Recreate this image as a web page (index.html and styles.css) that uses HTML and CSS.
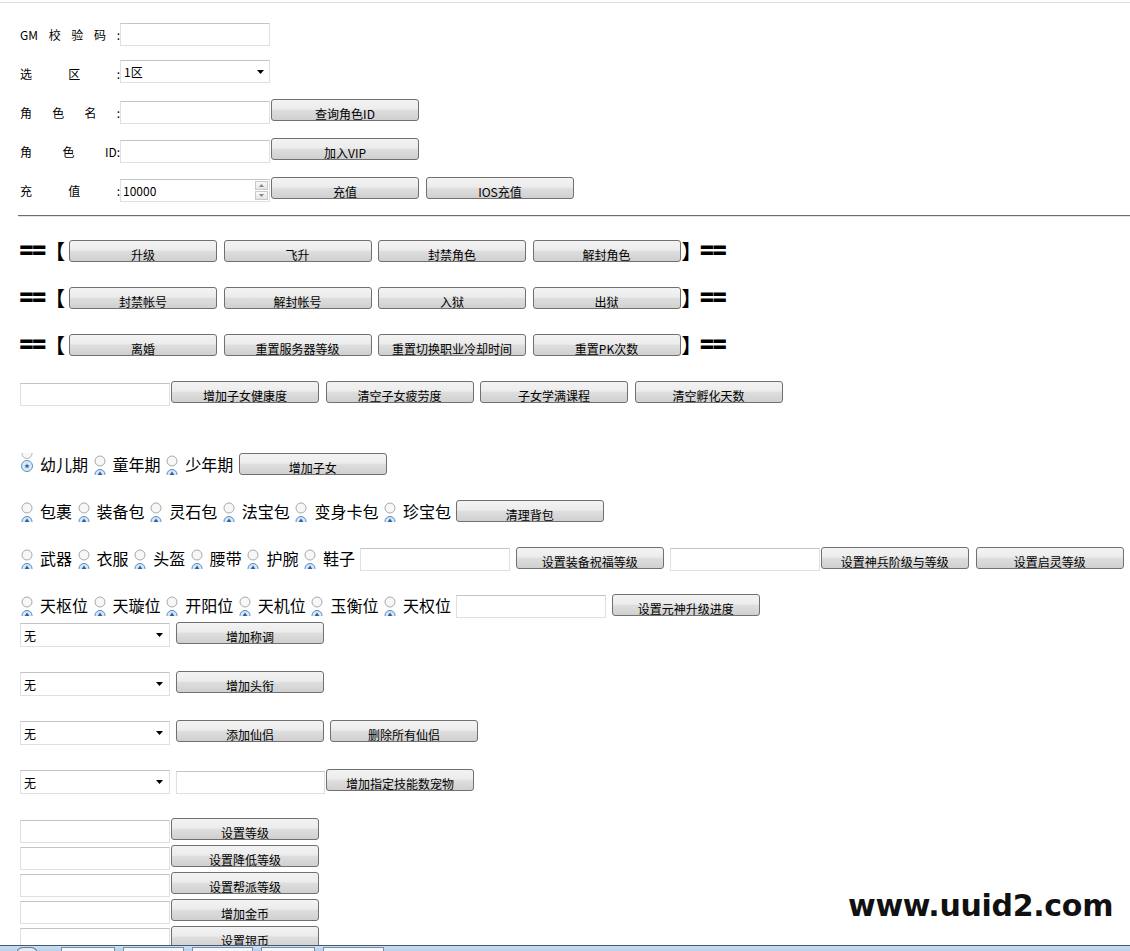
FILE: index.html
```html
<!DOCTYPE html>
<html lang="zh-CN">
<head>
<meta charset="utf-8">
<title>GM</title>
<link rel="stylesheet" href="styles.css">
</head>
<body>
<div class="topline"></div>
<div class="page">

  <section class="form">
    <div class="row frow">
      <div class="lbl"><span>GM</span><span>校</span><span>验</span><span>码</span><span>:</span></div>
      <input class="inp" type="text">
    </div>
    <div class="row frow">
      <div class="lbl"><span>选</span><span>区</span><span>:</span></div>
      <div class="sel"><span>1区</span><svg width="7" height="4" viewBox="0 0 7 4"><path d="M0 0H7L3.5 4Z" fill="#000"/></svg></div>
    </div>
    <div class="row frow">
      <div class="lbl"><span>角</span><span>色</span><span>名</span><span>:</span></div>
      <input class="inp" type="text">
      <button class="btn ml1">查询角色ID</button>
    </div>
    <div class="row frow">
      <div class="lbl"><span>角</span><span>色</span><span>ID:</span></div>
      <input class="inp" type="text">
      <button class="btn ml1">加入VIP</button>
    </div>
    <div class="row frow">
      <div class="lbl"><span>充</span><span>值</span><span>:</span></div>
      <div class="inp spin"><span>10000</span>
        <div class="spinbtns">
          <div class="sb"><svg width="5" height="3" viewBox="0 0 5 3"><path d="M0 3H5L2.5 0Z" fill="#7a8a9a"/></svg></div>
          <div class="sb"><svg width="5" height="3" viewBox="0 0 5 3"><path d="M0 0H5L2.5 3Z" fill="#7a8a9a"/></svg></div>
        </div>
      </div>
      <button class="btn ml1">充值</button>
      <button class="btn ml7">IOS充值</button>
    </div>
  </section>

  <hr class="sep">

  <section class="ops">
    <div class="row brow">
      <span class="eq">==</span><span class="lb">【</span>
      <div class="bgroup"><button class="btn">升级</button><button class="btn">飞升</button><button class="btn">封禁角色</button><button class="btn">解封角色</button></div>
      <span class="rb">】</span><span class="eq">==</span>
    </div>
    <div class="row brow">
      <span class="eq">==</span><span class="lb">【</span>
      <div class="bgroup"><button class="btn">封禁帐号</button><button class="btn">解封帐号</button><button class="btn">入狱</button><button class="btn">出狱</button></div>
      <span class="rb">】</span><span class="eq">==</span>
    </div>
    <div class="row brow">
      <span class="eq">==</span><span class="lb">【</span>
      <div class="bgroup"><button class="btn">离婚</button><button class="btn">重置服务器等级</button><button class="btn">重置切换职业冷却时间</button><button class="btn">重置PK次数</button></div>
      <span class="rb">】</span><span class="eq">==</span>
    </div>
    <div class="row crow">
      <input class="inp" type="text">
      <div class="bgroup ml1"><button class="btn">增加子女健康度</button><button class="btn">清空子女疲劳度</button><button class="btn">子女学满课程</button><button class="btn">清空孵化天数</button></div>
    </div>
  </section>

  <section class="radios">
    <div class="row rrow first">
      <label class="opt"><svg class="rd" width="14" height="22" viewBox="0 0 14 22"><circle cx="7" cy="0.5" r="5" fill="#f7f7f7" stroke="#b4b4b4"/><circle cx="7" cy="13" r="5.5" fill="#dce9f6" stroke="#5c90c6"/><path d="M7 10.4L7.8 12.2H9.7L8.2 13.4L8.8 15.3L7 14.2L5.2 15.3L5.8 13.4L4.3 12.2H6.2Z" fill="#2d63a8"/></svg>幼儿期</label>
      <label class="opt"><svg class="rd" width="14" height="22" viewBox="0 0 14 22"><circle cx="7" cy="8" r="5" fill="#f7f7f7" stroke="#a9a9a9"/><circle cx="7" cy="21.5" r="5" fill="#d5e6f6" stroke="#4f8bc6"/><path d="M4.6 22L7 18.6L9.4 22Z" fill="#2a5f9e"/></svg>童年期</label>
      <label class="opt"><svg class="rd" width="14" height="22" viewBox="0 0 14 22"><circle cx="7" cy="8" r="5" fill="#f7f7f7" stroke="#a9a9a9"/><circle cx="7" cy="21.5" r="5" fill="#d5e6f6" stroke="#4f8bc6"/><path d="M4.6 22L7 18.6L9.4 22Z" fill="#2a5f9e"/></svg>少年期</label>
      <button class="btn ml1">增加子女</button>
    </div>
    <div class="row rrow">
      <label class="opt"><svg class="rd" width="14" height="22" viewBox="0 0 14 22"><circle cx="7" cy="8" r="5" fill="#f7f7f7" stroke="#a9a9a9"/><circle cx="7" cy="21.5" r="5" fill="#d5e6f6" stroke="#4f8bc6"/><path d="M4.6 22L7 18.6L9.4 22Z" fill="#2a5f9e"/></svg>包裹</label>
      <label class="opt"><svg class="rd" width="14" height="22" viewBox="0 0 14 22"><circle cx="7" cy="8" r="5" fill="#f7f7f7" stroke="#a9a9a9"/><circle cx="7" cy="21.5" r="5" fill="#d5e6f6" stroke="#4f8bc6"/><path d="M4.6 22L7 18.6L9.4 22Z" fill="#2a5f9e"/></svg>装备包</label>
      <label class="opt"><svg class="rd" width="14" height="22" viewBox="0 0 14 22"><circle cx="7" cy="8" r="5" fill="#f7f7f7" stroke="#a9a9a9"/><circle cx="7" cy="21.5" r="5" fill="#d5e6f6" stroke="#4f8bc6"/><path d="M4.6 22L7 18.6L9.4 22Z" fill="#2a5f9e"/></svg>灵石包</label>
      <label class="opt"><svg class="rd" width="14" height="22" viewBox="0 0 14 22"><circle cx="7" cy="8" r="5" fill="#f7f7f7" stroke="#a9a9a9"/><circle cx="7" cy="21.5" r="5" fill="#d5e6f6" stroke="#4f8bc6"/><path d="M4.6 22L7 18.6L9.4 22Z" fill="#2a5f9e"/></svg>法宝包</label>
      <label class="opt"><svg class="rd" width="14" height="22" viewBox="0 0 14 22"><circle cx="7" cy="8" r="5" fill="#f7f7f7" stroke="#a9a9a9"/><circle cx="7" cy="21.5" r="5" fill="#d5e6f6" stroke="#4f8bc6"/><path d="M4.6 22L7 18.6L9.4 22Z" fill="#2a5f9e"/></svg>变身卡包</label>
      <label class="opt"><svg class="rd" width="14" height="22" viewBox="0 0 14 22"><circle cx="7" cy="8" r="5" fill="#f7f7f7" stroke="#a9a9a9"/><circle cx="7" cy="21.5" r="5" fill="#d5e6f6" stroke="#4f8bc6"/><path d="M4.6 22L7 18.6L9.4 22Z" fill="#2a5f9e"/></svg>珍宝包</label>
      <button class="btn">清理背包</button>
    </div>
    <div class="row rrow">
      <label class="opt"><svg class="rd" width="14" height="22" viewBox="0 0 14 22"><circle cx="7" cy="8" r="5" fill="#f7f7f7" stroke="#a9a9a9"/><circle cx="7" cy="21.5" r="5" fill="#d5e6f6" stroke="#4f8bc6"/><path d="M4.6 22L7 18.6L9.4 22Z" fill="#2a5f9e"/></svg>武器</label>
      <label class="opt"><svg class="rd" width="14" height="22" viewBox="0 0 14 22"><circle cx="7" cy="8" r="5" fill="#f7f7f7" stroke="#a9a9a9"/><circle cx="7" cy="21.5" r="5" fill="#d5e6f6" stroke="#4f8bc6"/><path d="M4.6 22L7 18.6L9.4 22Z" fill="#2a5f9e"/></svg>衣服</label>
      <label class="opt"><svg class="rd" width="14" height="22" viewBox="0 0 14 22"><circle cx="7" cy="8" r="5" fill="#f7f7f7" stroke="#a9a9a9"/><circle cx="7" cy="21.5" r="5" fill="#d5e6f6" stroke="#4f8bc6"/><path d="M4.6 22L7 18.6L9.4 22Z" fill="#2a5f9e"/></svg>头盔</label>
      <label class="opt"><svg class="rd" width="14" height="22" viewBox="0 0 14 22"><circle cx="7" cy="8" r="5" fill="#f7f7f7" stroke="#a9a9a9"/><circle cx="7" cy="21.5" r="5" fill="#d5e6f6" stroke="#4f8bc6"/><path d="M4.6 22L7 18.6L9.4 22Z" fill="#2a5f9e"/></svg>腰带</label>
      <label class="opt"><svg class="rd" width="14" height="22" viewBox="0 0 14 22"><circle cx="7" cy="8" r="5" fill="#f7f7f7" stroke="#a9a9a9"/><circle cx="7" cy="21.5" r="5" fill="#d5e6f6" stroke="#4f8bc6"/><path d="M4.6 22L7 18.6L9.4 22Z" fill="#2a5f9e"/></svg>护腕</label>
      <label class="opt"><svg class="rd" width="14" height="22" viewBox="0 0 14 22"><circle cx="7" cy="8" r="5" fill="#f7f7f7" stroke="#a9a9a9"/><circle cx="7" cy="21.5" r="5" fill="#d5e6f6" stroke="#4f8bc6"/><path d="M4.6 22L7 18.6L9.4 22Z" fill="#2a5f9e"/></svg>鞋子</label>
      <input class="inp mt1" type="text">
      <button class="btn ml6">设置装备祝福等级</button>
      <input class="inp mt1 ml6" type="text">
      <button class="btn ml1">设置神兵阶级与等级</button>
      <button class="btn ml7">设置启灵等级</button>
    </div>
    <div class="row rrow">
      <label class="opt"><svg class="rd" width="14" height="22" viewBox="0 0 14 22"><circle cx="7" cy="8" r="5" fill="#f7f7f7" stroke="#a9a9a9"/><circle cx="7" cy="21.5" r="5" fill="#d5e6f6" stroke="#4f8bc6"/><path d="M4.6 22L7 18.6L9.4 22Z" fill="#2a5f9e"/></svg>天枢位</label>
      <label class="opt"><svg class="rd" width="14" height="22" viewBox="0 0 14 22"><circle cx="7" cy="8" r="5" fill="#f7f7f7" stroke="#a9a9a9"/><circle cx="7" cy="21.5" r="5" fill="#d5e6f6" stroke="#4f8bc6"/><path d="M4.6 22L7 18.6L9.4 22Z" fill="#2a5f9e"/></svg>天璇位</label>
      <label class="opt"><svg class="rd" width="14" height="22" viewBox="0 0 14 22"><circle cx="7" cy="8" r="5" fill="#f7f7f7" stroke="#a9a9a9"/><circle cx="7" cy="21.5" r="5" fill="#d5e6f6" stroke="#4f8bc6"/><path d="M4.6 22L7 18.6L9.4 22Z" fill="#2a5f9e"/></svg>开阳位</label>
      <label class="opt"><svg class="rd" width="14" height="22" viewBox="0 0 14 22"><circle cx="7" cy="8" r="5" fill="#f7f7f7" stroke="#a9a9a9"/><circle cx="7" cy="21.5" r="5" fill="#d5e6f6" stroke="#4f8bc6"/><path d="M4.6 22L7 18.6L9.4 22Z" fill="#2a5f9e"/></svg>天机位</label>
      <label class="opt"><svg class="rd" width="14" height="22" viewBox="0 0 14 22"><circle cx="7" cy="8" r="5" fill="#f7f7f7" stroke="#a9a9a9"/><circle cx="7" cy="21.5" r="5" fill="#d5e6f6" stroke="#4f8bc6"/><path d="M4.6 22L7 18.6L9.4 22Z" fill="#2a5f9e"/></svg>玉衡位</label>
      <label class="opt"><svg class="rd" width="14" height="22" viewBox="0 0 14 22"><circle cx="7" cy="8" r="5" fill="#f7f7f7" stroke="#a9a9a9"/><circle cx="7" cy="21.5" r="5" fill="#d5e6f6" stroke="#4f8bc6"/><path d="M4.6 22L7 18.6L9.4 22Z" fill="#2a5f9e"/></svg>天权位</label>
      <input class="inp mt1" type="text">
      <button class="btn ml6">设置元神升级进度</button>
    </div>
  </section>

  <section class="selects">
    <div class="row srow first">
      <div class="sel sm"><span>无</span><svg width="7" height="4" viewBox="0 0 7 4"><path d="M0 0H7L3.5 4Z" fill="#000"/></svg></div>
      <button class="btn ml6">增加称调</button>
    </div>
    <div class="row srow">
      <div class="sel sm"><span>无</span><svg width="7" height="4" viewBox="0 0 7 4"><path d="M0 0H7L3.5 4Z" fill="#000"/></svg></div>
      <button class="btn ml6">增加头衔</button>
    </div>
    <div class="row srow">
      <div class="sel sm"><span>无</span><svg width="7" height="4" viewBox="0 0 7 4"><path d="M0 0H7L3.5 4Z" fill="#000"/></svg></div>
      <button class="btn ml6">添加仙侣</button>
      <button class="btn ml6">删除所有仙侣</button>
    </div>
    <div class="row srow">
      <div class="sel sm"><span>无</span><svg width="7" height="4" viewBox="0 0 7 4"><path d="M0 0H7L3.5 4Z" fill="#000"/></svg></div>
      <input class="inp narrow ml6" type="text">
      <button class="btn ml1">增加指定技能数宠物</button>
    </div>
  </section>

  <section class="stack">
    <div class="row krow"><input class="inp" type="text"><button class="btn ml1">设置等级</button></div>
    <div class="row krow"><input class="inp" type="text"><button class="btn ml1">设置降低等级</button></div>
    <div class="row krow"><input class="inp" type="text"><button class="btn ml1">设置帮派等级</button></div>
    <div class="row krow"><input class="inp" type="text"><button class="btn ml1">增加金币</button></div>
    <div class="row krow"><input class="inp" type="text"><button class="btn ml1">设置银币</button></div>
  </section>
</div>

<div class="watermark">www.uuid2.com</div>

<div class="taskbar">
  <div class="orb"></div>
  <div class="task w52"></div>
  <div class="task w59"></div>
  <div class="task w59"></div>
  <div class="task w52"></div>
  <div class="task w59"></div>
</div>
</body>
</html>
```

FILE: styles.css
```css
html, body {
  margin: 0;
  padding: 0;
  background: #ffffff;
}
body {
  width: 1130px;
  height: 951px;
  overflow: hidden;
  position: relative;
  font-family: "Noto Sans CJK SC", "Liberation Sans", sans-serif;
  font-size: 12px;
  color: #000;
}
.topline {
  height: 1px;
  margin-top: 2px;
  background: #dedede;
}
.page {
  padding-left: 20px;
}
.row {
  display: flex;
  align-items: flex-start;
}

/* generic controls */
.inp {
  box-sizing: border-box;
  width: 150px;
  height: 23px;
  margin: 2px 0 0 0;
  padding: 0 3px;
  border: 1px solid #e0e0e0;
  border-top-color: #c4c4c4;
  background: #fff;
  font: 12px "Noto Sans CJK SC", sans-serif;
  outline: none;
  flex: none;
}
.inp.narrow { width: 149px; }
.mt1 { margin-top: 1px; }
.ml1 { margin-left: 1px; }
.ml6 { margin-left: 6px; }
.ml7 { margin-left: 7px; }

.btn {
  box-sizing: border-box;
  flex: none;
  width: 148px;
  height: 22px;
  margin-top: 0;
  padding: 7px 0 0 0;
  border: 1px solid #707070;
  border-radius: 3px;
  background: linear-gradient(#f3f3f3 0%, #ececec 45%, #dedede 52%, #d0d0d0 100%);
  font: 12px/14px "Noto Sans CJK SC", sans-serif;
  color: #000;
  text-align: center;
  white-space: nowrap;
  overflow: hidden;
}

.sel {
  box-sizing: border-box;
  width: 150px;
  height: 23px;
  margin-top: 0;
  padding: 0 5px 0 3px;
  border: 1px solid #e0e0e0;
  border-top-color: #c4c4c4;
  display: flex;
  align-items: center;
  justify-content: space-between;
  line-height: 21px;
  flex: none;
}
.sel.sm {
  height: 24px;
  margin-top: 1px;
  padding-right: 6px;
}

/* top form */
.frow {
  margin-top: 14px;
  height: 25px;
}
.form .frow:first-child {
  margin-top: 18px;
}
.lbl {
  width: 100px;
  height: 23px;
  margin-top: 2px;
  line-height: 23px;
  display: flex;
  justify-content: space-between;
  flex: none;
}
.frow .sel + * { margin: 0; }
.spin {
  display: flex;
  align-items: center;
  justify-content: space-between;
  padding: 0 1px 0 2px;
}
.spinbtns {
  display: flex;
  flex-direction: column;
  gap: 1px;
}
.sb {
  width: 13px;
  height: 9px;
  box-sizing: border-box;
  border: 1px solid #c9c9c9;
  background: linear-gradient(#fafafa, #e4e4e4);
  display: flex;
  align-items: center;
  justify-content: center;
}

.sep {
  margin: 13px 0 0 -2px;
  height: 0;
  border: 0;
  border-top: 1px solid #6e6e6e;
  border-bottom: 1px solid #e6e6e6;
}

/* bracket rows */
.brow {
  height: 22px;
  align-items: center;
  margin-top: 25px;
}
.ops .brow:first-child {
  margin-top: 23px;
}
.eq {
  width: 27px;
  font: bold 22px/22px "Liberation Sans", sans-serif;
  -webkit-text-stroke: 1.2px #000;
  flex: none;
}
.lb, .rb {
  width: 20px;
  font: bold 20px/22px "Noto Sans CJK SC", sans-serif;
  flex: none;
}
.lb { margin-left: -2px; margin-right: 4px; }
.rb { margin-left: 1px; margin-right: -1px; }
.bgroup {
  display: flex;
  gap: 6.5px;
}
.crow {
  height: 25px;
  margin-top: 25px;
}

/* radio rows */
.rrow {
  height: 22px;
  margin-top: 25px;
}
.radios .rrow.first {
  margin-top: 47px;
}
.opt {
  display: flex;
  align-items: center;
  height: 22px;
  font-size: 16px;
  line-height: 22px;
  margin-right: 4.6px;
  flex: none;
  white-space: nowrap;
}
.rd {
  margin-right: 6px;
  flex: none;
}

/* select rows */
.srow {
  height: 25px;
  margin-top: 24px;
}
.selects .srow.first {
  margin-top: 6px;
}

/* bottom stack */
.stack {
  margin-top: 24px;
}
.krow {
  height: 25px;
  margin-bottom: 2px;
}

/* watermark */
.watermark {
  position: absolute;
  left: 848px;
  top: 891px;
  font: bold 30px/30px "DejaVu Sans", sans-serif;
  letter-spacing: -0.3px;
  color: #111;
}

/* taskbar */
.taskbar {
  position: fixed;
  left: 0;
  bottom: 0;
  width: 100%;
  height: 5px;
  border-top: 1px solid #47586c;
  background: linear-gradient(#c9def3, #b6d2ee);
  display: flex;
  align-items: flex-start;
  gap: 8px;
  padding-left: 16px;
  box-sizing: content-box;
}
.orb {
  width: 20px;
  height: 6px;
  border: 1px solid #6b7c90;
  border-bottom: 0;
  border-radius: 10px 10px 0 0;
  margin-top: 1px;
  margin-right: 15px;
  background: #dfeaf5;
}
.task {
  height: 5px;
  margin-top: 1px;
  border: 1px solid #7d8ea2;
  border-bottom: 0;
  background: #f3f7fb;
}
.w52 { width: 52px; }
.w59 { width: 59px; }
```
